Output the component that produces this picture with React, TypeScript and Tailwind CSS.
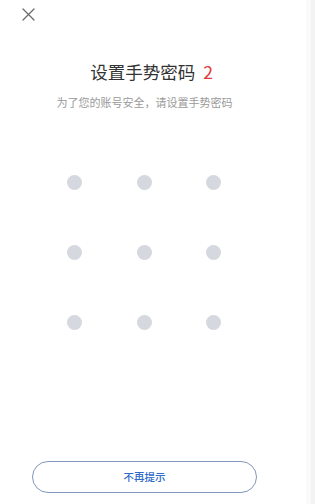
import React from 'react';

const dots = Array.from({ length: 9 });

export default function App() {
    return (
        <div className="flex h-[504px] w-full bg-white font-['Noto_Sans_CJK_SC','Noto_Sans',sans-serif]">
            {/* main column */}
            <div className="flex w-[289px] shrink-0 flex-col">
                <div className="pl-[22px] pt-[8px]">
                    <svg width="13" height="13" viewBox="0 0 13 13" fill="none" stroke="#6b6b6b" strokeWidth="1.3" strokeLinecap="round">
                        <path d="M1 1 L12 12 M12 1 L1 12" />
                    </svg>
                </div>

                <h1 className="mt-[39px] pl-[14px] text-center text-[17.5px] leading-[24px] font-normal text-[#333]">
                    设置手势密码<span className="ml-[8px] text-[#e0393e]">2</span>
                </h1>
                <p className="mt-[10px] text-center text-[11px] leading-[16px] text-[#9a9a9a]">
                    为了您的账号安全，请设置手势密码
                </p>

                {/* gesture grid */}
                <div className="mt-[65px] ml-[67px] grid w-max grid-cols-3 gap-x-[54.5px] gap-y-[55px]">
                    {dots.map((_, i) => (
                        <span key={i} className="block h-[15px] w-[15px] rounded-full bg-[#d6d8df]" />
                    ))}
                </div>

                <button className="mt-auto mb-[11px] ml-[32px] h-[32px] w-[225px] rounded-full border border-[#8198ba] text-[10.5px] font-medium text-[#2f6bc7]">
                    不再提示
                </button>
            </div>

            <div className="flex-1" />
            <div className="w-[5px] bg-[#fafafa]" />
            <div className="w-[4px] bg-[#f3f3f3]" />
        </div>
    );
}
